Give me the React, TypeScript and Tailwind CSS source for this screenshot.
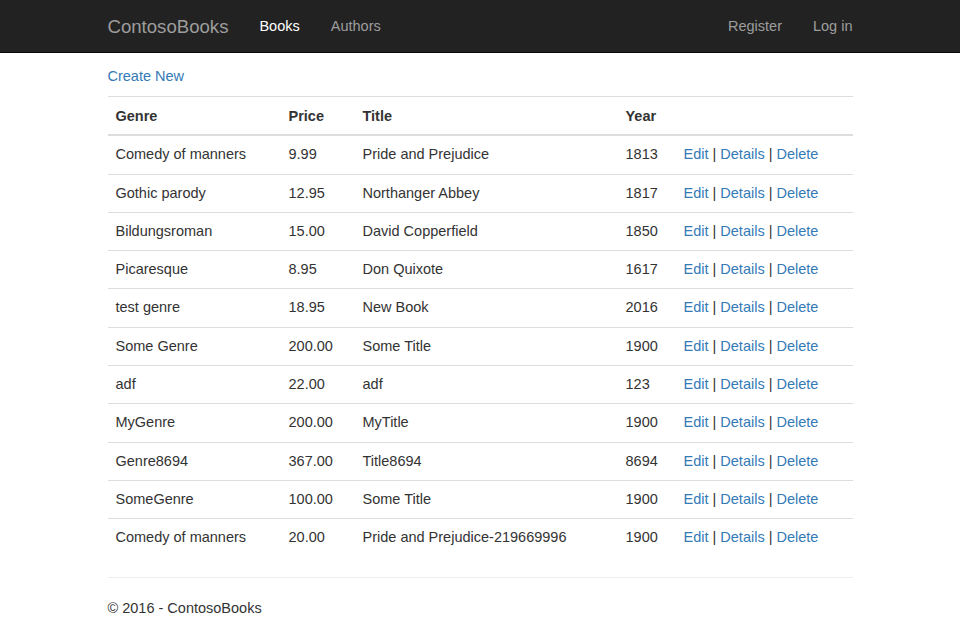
/**
 * ContosoBooks — Books index (Bootstrap 3 look, rebuilt with Tailwind).
 */

const books = [
  { genre: "Comedy of manners", price: "9.99", title: "Pride and Prejudice", year: "1813" },
  { genre: "Gothic parody", price: "12.95", title: "Northanger Abbey", year: "1817" },
  { genre: "Bildungsroman", price: "15.00", title: "David Copperfield", year: "1850" },
  { genre: "Picaresque", price: "8.95", title: "Don Quixote", year: "1617" },
  { genre: "test genre", price: "18.95", title: "New Book", year: "2016" },
  { genre: "Some Genre", price: "200.00", title: "Some Title", year: "1900" },
  { genre: "adf", price: "22.00", title: "adf", year: "123" },
  { genre: "MyGenre", price: "200.00", title: "MyTitle", year: "1900" },
  { genre: "Genre8694", price: "367.00", title: "Title8694", year: "8694" },
  { genre: "SomeGenre", price: "100.00", title: "Some Title", year: "1900" },
  { genre: "Comedy of manners", price: "20.00", title: "Pride and Prejudice-219669996", year: "1900" },
];

export default function App() {
  return (
    <div className="min-h-[629px] bg-white text-[#333] text-[14.5px] font-['Liberation_Sans',Arial,sans-serif]">
      {/* navbar-inverse */}
      <nav className="h-[53px] bg-[#222] border-b border-[#080808]">
        <div className="w-[745px] mx-auto h-full pt-[2px] flex items-center">
          <a href="#" className="text-[18.6px] text-[#9d9d9d]">ContosoBooks</a>
          <a href="#" className="ml-[31px] text-white">Books</a>
          <a href="#" className="ml-[31px] text-[#9d9d9d]">Authors</a>
          <div className="ml-auto flex gap-[31px]">
            <a href="#" className="text-[#9d9d9d]">Register</a>
            <a href="#" className="text-[#9d9d9d]">Log in</a>
          </div>
        </div>
      </nav>

      <div className="w-[745px] mx-auto">
        <p className="mt-[13px] mb-[9px] leading-[21px]">
          <a href="#" className="text-[#337ab7]">Create New</a>
        </p>

        <table className="w-full border-collapse leading-[21.3px] table-fixed">
          <colgroup>
            <col className="w-[173px]" />
            <col className="w-[74px]" />
            <col className="w-[263px]" />
            <col className="w-[58px]" />
            <col />
          </colgroup>
          <thead>
            <tr className="border-t border-[#ddd] border-b-2 border-b-[#ddd]">
              <th className="text-left font-bold px-2 pt-[9px] pb-[7px]">Genre</th>
              <th className="text-left font-bold px-2 pt-[9px] pb-[7px]">Price</th>
              <th className="text-left font-bold px-2 pt-[9px] pb-[7px]">Title</th>
              <th className="text-left font-bold px-2 pt-[9px] pb-[7px]">Year</th>
              <th className="px-2 pt-[9px] pb-[7px]"></th>
            </tr>
          </thead>
          <tbody>
            {books.map((b, i) => (
              <tr key={i} className={i === 0 ? "" : "border-t border-[#ddd]"}>
                <td className="px-2 py-2 whitespace-nowrap">{b.genre}</td>
                <td className="px-2 py-2">{b.price}</td>
                <td className="px-2 py-2 whitespace-nowrap">{b.title}</td>
                <td className="px-2 py-2">{b.year}</td>
                <td className="px-2 py-2 whitespace-nowrap">
                  <a href="#" className="text-[#337ab7]">Edit</a> |{" "}
                  <a href="#" className="text-[#337ab7]">Details</a> |{" "}
                  <a href="#" className="text-[#337ab7]">Delete</a>
                </td>
              </tr>
            ))}
          </tbody>
        </table>

        <hr className="mt-[20px] mb-[20px] border-0 border-t border-[#eee]" />
        <footer>
          <p className="leading-[21px]">© 2016 - ContosoBooks</p>
        </footer>
      </div>
    </div>
  );
}
